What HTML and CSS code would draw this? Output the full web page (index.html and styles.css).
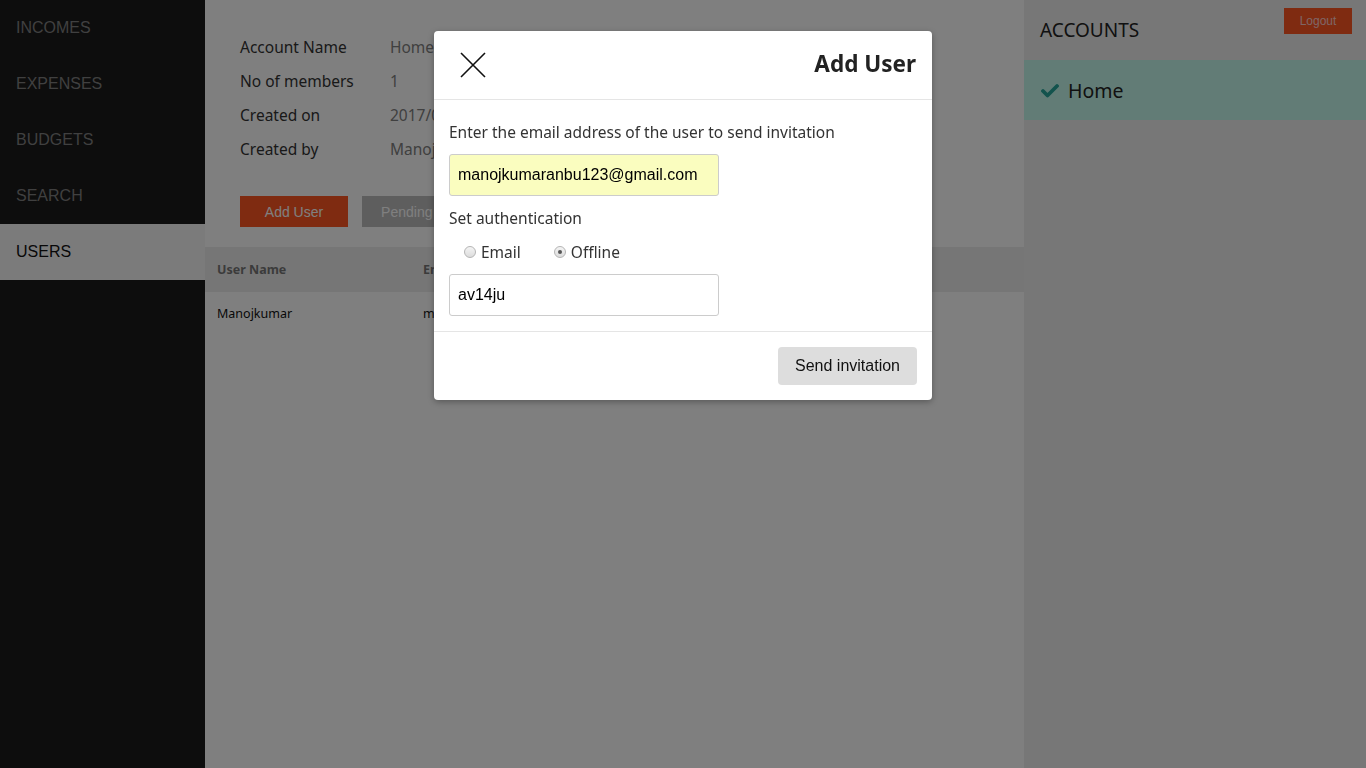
FILE: index.html
```html
<!DOCTYPE html>
<html>
<head>
<meta charset="utf-8">
<link rel="stylesheet" href="styles.css">
</head>
<body>
<div class="app">
  <nav class="sidebar">
    <a class="nav-item">INCOMES</a>
    <a class="nav-item">EXPENSES</a>
    <a class="nav-item">BUDGETS</a>
    <a class="nav-item">SEARCH</a>
    <a class="nav-item active">USERS</a>
  </nav>
  <main class="main">
    <section class="info">
      <div class="info-grid">
        <div class="label">Account Name</div><div class="value">Home</div>
        <div class="label">No of members</div><div class="value">1</div>
        <div class="label">Created on</div><div class="value">2017/06/12</div>
        <div class="label">Created by</div><div class="value">Manojkumar</div>
      </div>
      <div class="actions">
        <button class="btn btn-orange">Add User</button>
        <button class="btn btn-grey">Pending Users</button>
      </div>
    </section>
    <div class="table">
      <div class="trow thead"><div class="c1">User Name</div><div class="c2">Email</div></div>
      <div class="trow"><div class="c1">Manojkumar</div><div class="c2">manojkumaranbu123@gmail.com</div></div>
    </div>
  </main>
  <aside class="accounts">
    <div class="acc-head">ACCOUNTS</div>
    <button class="logout">Logout</button>
    <div class="acc-item">
      <svg class="check" width="18" height="15" viewBox="0 0 18 15"><path d="M2 8 L6.5 12.5 L16 3" fill="none" stroke="#26a69a" stroke-width="3.8" stroke-linecap="round" stroke-linejoin="round"/></svg>
      <span>Home</span>
    </div>
  </aside>
</div>

<div class="overlay"></div>

<div class="modal">
  <div class="modal-head">
    <svg class="close" width="26" height="26" viewBox="0 0 26 26"><path d="M1 1 L25 25 M25 1 L1 25" stroke="#111" stroke-width="1.6" fill="none"/></svg>
    <h2>Add User</h2>
  </div>
  <div class="modal-body">
    <p class="txt">Enter the email address of the user to send invitation</p>
    <div class="field autofill">manojkumaranbu123@gmail.com</div>
    <p class="txt sub">Set authentication</p>
    <div class="radios">
      <label class="radio"><span class="dot"></span>Email</label>
      <label class="radio"><span class="dot on"></span>Offline</label>
    </div>
    <div class="field">av14ju</div>
  </div>
  <div class="modal-foot">
    <button class="send">Send invitation</button>
  </div>
</div>
</body>
</html>
```

FILE: styles.css
```css
* { box-sizing: border-box; }
html, body { margin: 0; padding: 0; }
body {
  width: 1366px;
  height: 768px;
  overflow: hidden;
  font-family: "Noto Sans", "DejaVu Sans", sans-serif;
  color: #333;
  background: #fff;
}
.app { display: flex; height: 768px; }

.sidebar { width: 205px; background: #1a1a1a; display: flex; flex-direction: column; }
.nav-item {
  height: 56px; display: flex; align-items: center; padding-left: 16px;
  font-family: "Liberation Sans", Arial, sans-serif; font-size: 16px; color: #808080;
}
.nav-item.active { background: #f6f6f6; color: #111; }

.main { width: 819px; background: #fff; display: flex; flex-direction: column; }
.info { padding: 30px 35px 20px; }
.info-grid { display: grid; grid-template-columns: 150px 1fr; grid-auto-rows: 34px; align-items: center; font-size: 15.5px; }
.label { color: #333; }
.value { color: #808080; }
.actions { display: flex; gap: 14px; margin-top: 30px; }
.btn {
  height: 31px; border: 0; font-family: "Liberation Sans", Arial, sans-serif; font-size: 14px; padding: 0;
}
.btn-orange { background: #ff5722; color: #fff; width: 108px; }
.btn-grey { background: #bcbcbc; color: #fff; width: 130px; }

.table { font-family: "Noto Sans", sans-serif; font-size: 12.5px; }
.trow { display: flex; align-items: center; height: 43px; padding-left: 12px; color: #111; }
.thead { height: 45px; background: #ededed; font-weight: bold; color: #777; }
.c1 { width: 206px; }

.accounts { flex: 1; background: #eee; position: relative; }
.acc-head { height: 60px; display: flex; align-items: center; padding-left: 16px; font-size: 19px; color: #222; }
.logout {
  position: absolute; top: 8px; right: 14px; width: 68px; height: 26px;
  background: #ff5722; color: #fcc; border: 0; font-family: "Liberation Sans", Arial, sans-serif; font-size: 12px;
}
.acc-item { height: 60px; background: #c5f9ed; display: flex; align-items: center; padding-left: 17px; gap: 9px; font-size: 19.5px; color: #222; }

.overlay { position: fixed; inset: 0; background: rgba(0,0,0,0.5); }

.modal {
  position: absolute; left: 434px; top: 31px; width: 498px;
  background: #fff; border-radius: 4px; box-shadow: 0 2px 6px rgba(0,0,0,0.3);
}
.modal-head {
  height: 69px; border-bottom: 1px solid #e5e5e5; display: flex; align-items: center; justify-content: space-between;
  padding: 0 16px 3px 26px;
}
.modal-head h2 { margin: 0; font-size: 22.5px; font-weight: bold; color: #222; }
.close { display: block; margin-top: 3px; }
.modal-body { padding: 20px 15px 15px; border-bottom: 1px solid #e5e5e5; }
.txt { margin: 0; font-size: 15.5px; line-height: 24px; color: #333; }
.txt.sub { margin-top: 10px; }
.field {
  width: 270px; height: 42px; margin-top: 10px; border: 1px solid #ccc; border-radius: 3px;
  display: flex; align-items: center; padding-left: 8px;
  font-family: "Liberation Sans", Arial, sans-serif; font-size: 16px; color: #000;
}
.autofill { background: #fafdbf; }
.radios { display: flex; height: 24px; margin-top: 10px; padding-left: 15px; gap: 33px; align-items: center; }
.radio { display: flex; align-items: center; gap: 5px; font-size: 15.5px; color: #333; }
.dot {
  width: 12px; height: 12px; border-radius: 50%; border: 1px solid #b5b5b5;
  background: linear-gradient(#f4f4f4, #dcdcdc); position: relative;
}
.dot.on::after {
  content: ""; position: absolute; left: 3px; top: 3px; width: 4px; height: 4px; border-radius: 50%; background: #555;
}
.modal-foot { display: flex; justify-content: flex-end; padding: 15px; }
.send {
  height: 38px; width: 139px; border: 0; border-radius: 4px; background: #ddd;
  font-family: "Liberation Sans", Arial, sans-serif; font-size: 16px; color: #111;
}
```
